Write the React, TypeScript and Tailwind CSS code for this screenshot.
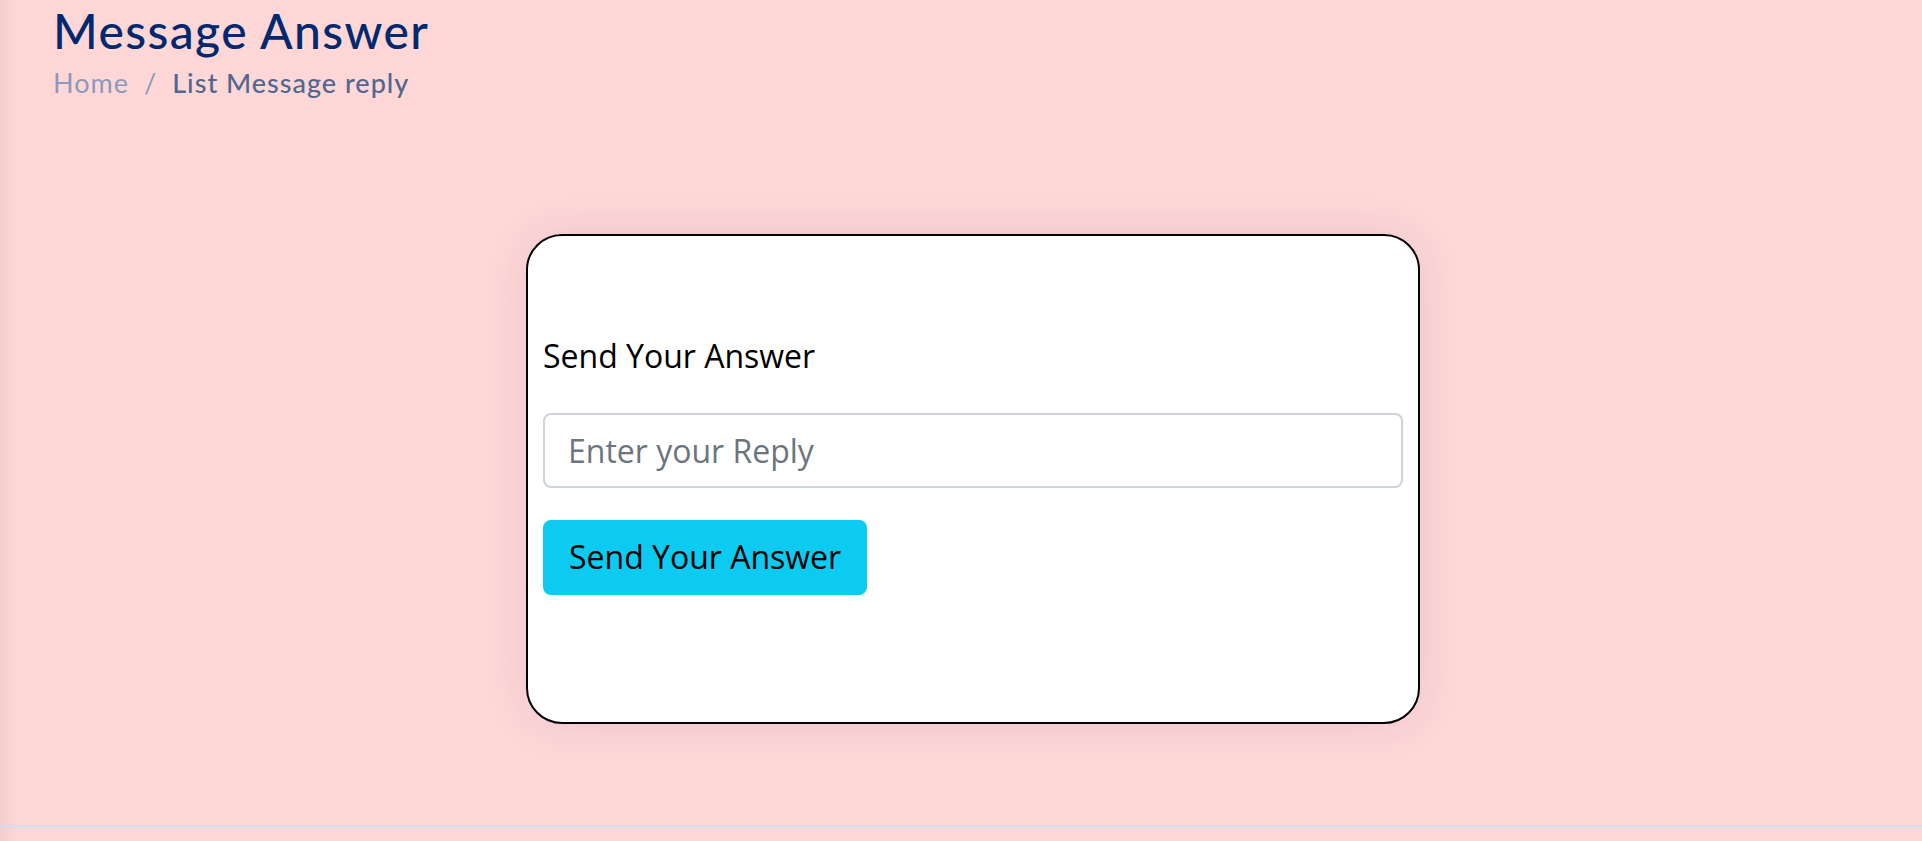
export default function App() {
  return (
    <div className="w-full h-[841px] flex flex-col overflow-hidden bg-[linear-gradient(to_right,#f4cdcf_0px,#ffd7d7_18px)]">
      <main className="h-[825px]">
        <div className="pl-[53px] pt-[2px] font-['Lato',sans-serif]">
          <h1 className="text-[48px] leading-[1.2] font-medium tracking-[1.4px] text-[#012970]">Message Answer</h1>
          <nav className="mt-[7px] flex items-center text-[27px] leading-[1.2] tracking-[1px]">
            <span className="text-[#899bbd]">Home</span>
            <span className="px-[15px] text-[#899bbd]">/</span>
            <span className="font-medium text-[#51678f]">List Message reply</span>
          </nav>
        </div>
        <section className="mt-[135px] flex justify-center pl-[24px]">
          <div className="w-[894px] h-[490px] border-2 border-black rounded-[36px] bg-white shadow-[0_0_48px_rgba(1,41,112,0.1)] px-[15px] pt-[96px] font-['Open_Sans',sans-serif]">
            <label className="block text-[32px] leading-[48px] text-black">Send Your Answer</label>
            <input
              type="text"
              placeholder="Enter your Reply"
              className="mt-[33px] block w-full h-[75px] border-2 border-[#ced4da] rounded-[8px] pl-[23px] pr-[23px] text-[32px] leading-[48px] text-[#212529] placeholder:text-[#6c757d] outline-none bg-white"
            />
            <button
              type="button"
              className="mt-[32px] block h-[75px] w-[324px] rounded-[8px] bg-[#0dcaf0] text-left pl-[26px] text-[32px] leading-[48px] text-black"
            >
              Send Your Answer
            </button>
          </div>
        </section>
      </main>
      <footer className="flex-1 border-t-2 border-[#cddfff]" />
    </div>
  );
}
